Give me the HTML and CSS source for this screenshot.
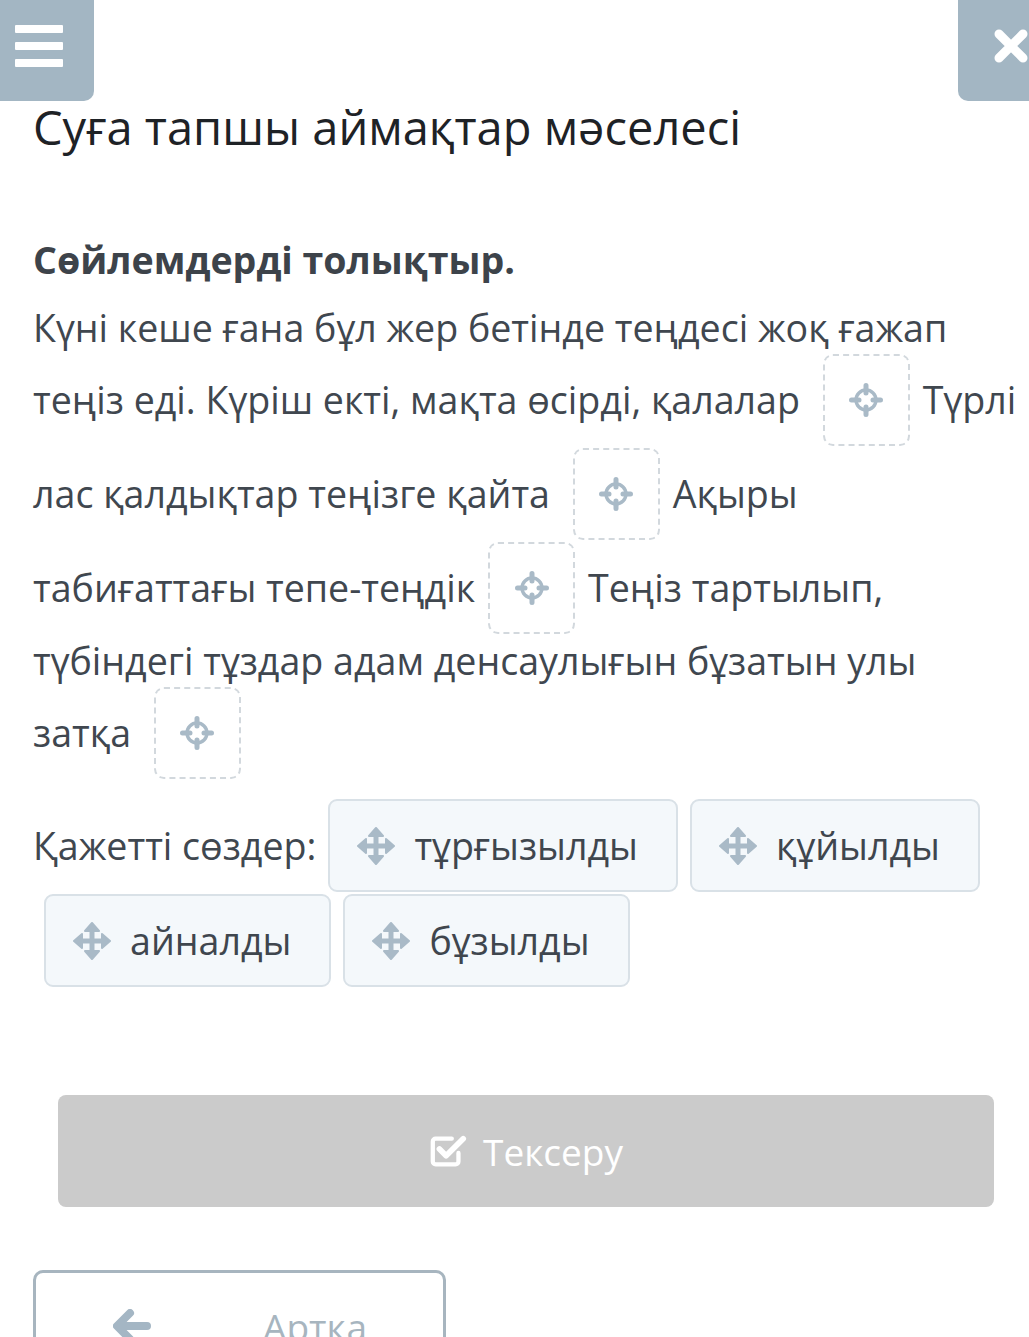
FILE: index.html
```html
<!DOCTYPE html>
<html lang="kk">
<head>
<meta charset="utf-8">
<title>Суға тапшы аймақтар мәселесі</title>
<link rel="stylesheet" href="styles.css">
</head>
<body>
<header class="topbar">
  <div class="menu-btn">
    <span class="bar"></span><span class="bar"></span><span class="bar"></span>
  </div>
  <div class="close-btn">
    <svg class="close-icon" viewBox="0 0 36 36" width="36" height="36"><path d="M6 6 L30 30 M30 6 L6 30" stroke="#fff" stroke-width="9" stroke-linecap="round"/></svg>
  </div>
</header>
<main class="content">
  <h1 class="title">Суға тапшы аймақтар мәселесі</h1>
  <h2 class="task">Сөйлемдерді толықтыр.</h2>
  <p class="text">Күні кеше ғана бұл жер бетінде теңдесі жоқ ғажап теңіз еді. Күріш екті, мақта өсірді, қалалар <span class="drop"><svg class="target" viewBox="0 0 34 34" width="34" height="34"><circle cx="17" cy="17" r="10" fill="none" stroke="#a9bac7" stroke-width="3.4"/><path d="M17 2.5V10M17 24V31.5M2.5 17H10M24 17H31.5" stroke="#a9bac7" stroke-width="5" stroke-linecap="round"/></svg></span>Түрлі лас қалдықтар теңізге қайта <span class="drop"><svg class="target" viewBox="0 0 34 34" width="34" height="34"><circle cx="17" cy="17" r="10" fill="none" stroke="#a9bac7" stroke-width="3.4"/><path d="M17 2.5V10M17 24V31.5M2.5 17H10M24 17H31.5" stroke="#a9bac7" stroke-width="5" stroke-linecap="round"/></svg></span>Ақыры<br>табиғаттағы тепе-теңдік<span class="drop"><svg class="target" viewBox="0 0 34 34" width="34" height="34"><circle cx="17" cy="17" r="10" fill="none" stroke="#a9bac7" stroke-width="3.4"/><path d="M17 2.5V10M17 24V31.5M2.5 17H10M24 17H31.5" stroke="#a9bac7" stroke-width="5" stroke-linecap="round"/></svg></span>Теңіз тартылып, түбіндегі тұздар адам денсаулығын бұзатын улы затқа <span class="drop"><svg class="target" viewBox="0 0 34 34" width="34" height="34"><circle cx="17" cy="17" r="10" fill="none" stroke="#a9bac7" stroke-width="3.4"/><path d="M17 2.5V10M17 24V31.5M2.5 17H10M24 17H31.5" stroke="#a9bac7" stroke-width="5" stroke-linecap="round"/></svg></span></p>
  <div class="words">
    <span class="words-label">Қажетті сөздер:</span>
    <span class="chip"><svg class="move" viewBox="0 0 38 38" width="38" height="38"><path d="M19 5V33M5 19H33" stroke="#a9bac7" stroke-width="5"/><path d="M19 1L26 9H12Z M19 37L26 29H12Z M1 19L9 12V26Z M37 19L29 12V26Z" fill="#a9bac7" stroke="#a9bac7" stroke-width="2" stroke-linejoin="round"/></svg>тұрғызылды</span>
    <span class="chip"><svg class="move" viewBox="0 0 38 38" width="38" height="38"><path d="M19 5V33M5 19H33" stroke="#a9bac7" stroke-width="5"/><path d="M19 1L26 9H12Z M19 37L26 29H12Z M1 19L9 12V26Z M37 19L29 12V26Z" fill="#a9bac7" stroke="#a9bac7" stroke-width="2" stroke-linejoin="round"/></svg>құйылды</span>
    <span class="chip"><svg class="move" viewBox="0 0 38 38" width="38" height="38"><path d="M19 5V33M5 19H33" stroke="#a9bac7" stroke-width="5"/><path d="M19 1L26 9H12Z M19 37L26 29H12Z M1 19L9 12V26Z M37 19L29 12V26Z" fill="#a9bac7" stroke="#a9bac7" stroke-width="2" stroke-linejoin="round"/></svg>айналды</span>
    <span class="chip"><svg class="move" viewBox="0 0 38 38" width="38" height="38"><path d="M19 5V33M5 19H33" stroke="#a9bac7" stroke-width="5"/><path d="M19 1L26 9H12Z M19 37L26 29H12Z M1 19L9 12V26Z M37 19L29 12V26Z" fill="#a9bac7" stroke="#a9bac7" stroke-width="2" stroke-linejoin="round"/></svg>бұзылды</span>
  </div>
  <button class="check-btn" type="button"><svg class="check-icon" viewBox="0 0 40 40" width="38" height="38"><path d="M31 22V31a3 3 0 0 1-3 3H7a3 3 0 0 1-3-3V10a3 3 0 0 1 3-3H24" fill="none" stroke="#fff" stroke-width="4.5" stroke-linecap="round"/><path d="M11 18L18 25L36 7" fill="none" stroke="#fff" stroke-width="6" stroke-linecap="round" stroke-linejoin="round"/></svg>Тексеру</button>
  <button class="back-btn" type="button"><svg class="back-icon" viewBox="0 0 38 34" width="38" height="34"><path d="M17 4L4 17L17 30M5 17H34" fill="none" stroke="#a4b6c4" stroke-width="8" stroke-linecap="round" stroke-linejoin="round"/></svg><span class="back-text">Артқа</span></button>
</main>
</body>
</html>
```

FILE: styles.css
```css
html, body {
  margin: 0;
  padding: 0;
  background: #ffffff;
  overflow: hidden;
}
body {
  font-family: "Open Sans", "Noto Sans", sans-serif;
  color: #40474f;
  width: 1029px;
  height: 1337px;
}
.topbar {
  display: flex;
  justify-content: space-between;
  height: 101px;
}
.menu-btn {
  width: 94px;
  height: 101px;
  background: #a3b6c3;
  border-radius: 0 0 10px 0;
  box-sizing: border-box;
  padding: 25px 0 0 15px;
  display: flex;
  flex-direction: column;
  gap: 9px;
}
.bar {
  display: block;
  width: 48px;
  height: 8px;
  background: #ffffff;
  border-radius: 1px;
}
.close-btn {
  width: 71px;
  height: 101px;
  background: #a3b6c3;
  border-radius: 0 0 0 10px;
  box-sizing: border-box;
  padding: 28px 0 0 35px;
  overflow: hidden;
}
.close-icon {
  display: block;
}
.content {
  padding: 0 8px 0 33px;
}
.title {
  margin: 0;
  font-size: 47px;
  font-weight: 400;
  line-height: 52px;
  color: #1e2226;
}
.task {
  margin: 81px 0 0;
  font-size: 37.6px;
  font-weight: 700;
  line-height: 51px;
  color: #3d434a;
}
.text {
  margin: 17px 0 0;
  font-size: 37.6px;
  line-height: 51px;
}
.drop {
  display: inline-block;
  box-sizing: border-box;
  width: 87px;
  height: 92px;
  margin: 1px 13px;
  padding-top: 27px;
  border: 2px dashed #d2d8dd;
  border-radius: 10px;
  vertical-align: -33px;
}
.target {
  display: block;
  margin: 0 auto;
}
.words {
  display: flex;
  flex-wrap: wrap;
  align-items: center;
  column-gap: 12px;
  row-gap: 2px;
  margin-top: 19px;
  padding-left: 11px;
  font-size: 37.6px;
}
.words-label {
  margin-left: -11px;
  line-height: 51px;
}
.chip {
  display: inline-flex;
  align-items: center;
  gap: 19px;
  box-sizing: border-box;
  height: 93px;
  padding: 0 38px 0 27px;
  background: #f4f8fb;
  border: 2px solid #d9e1e7;
  border-radius: 9px;
  color: #3f464e;
}
.move {
  display: block;
  flex: none;
}
.check-btn {
  display: flex;
  align-items: center;
  justify-content: center;
  gap: 16px;
  width: 936px;
  height: 112px;
  margin: 108px 0 0 25px;
  background: #cbcbcb;
  border: none;
  border-radius: 8px;
  color: #ffffff;
  font-family: "Open Sans", "Noto Sans", sans-serif;
  font-size: 37px;
  padding: 0;
}
.check-icon {
  display: block;
}
.back-btn {
  display: flex;
  align-items: center;
  box-sizing: border-box;
  width: 413px;
  height: 112px;
  margin: 63px 0 0 0;
  padding: 0 0 0 77px;
  background: #ffffff;
  border: 3px solid #a7b5bf;
  border-radius: 10px;
  font-family: "Open Sans", "Noto Sans", sans-serif;
  font-size: 37px;
  color: #a7b5bf;
}
.back-icon {
  display: block;
  margin-right: 112px;
}
```
